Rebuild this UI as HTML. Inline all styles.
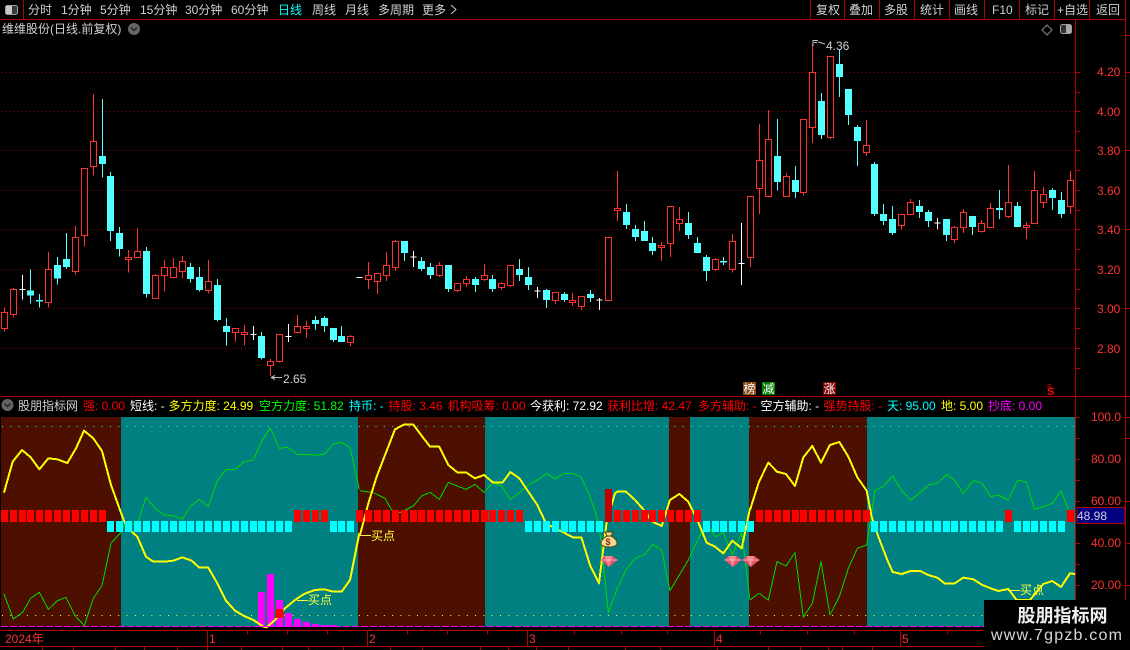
<!DOCTYPE html>
<html><head><meta charset="utf-8"><style>
html,body{margin:0;padding:0;background:#000;width:1130px;height:650px;overflow:hidden}
svg{display:block}
text{font-family:"Liberation Sans","WenQuanYi Zen Hei","Noto Sans CJK SC",sans-serif;font-size:12px;white-space:pre}
.t{fill:#d0d0d0}.r{fill:#f00}.w{fill:#fff}.y{fill:#ff0}.g{fill:#0f0}.c{fill:#0ff}.m{fill:#f0f}.a{fill:#ff3232}.b{fill:#ffff40}
</style></head><body>
<svg width="1130" height="650" viewBox="0 0 1130 650" xmlns="http://www.w3.org/2000/svg">
<rect width="1130" height="650" fill="#000"/>
<!-- grid -->
<path d="M1 72.5H1075M1 111.5H1075M1 150.5H1075M1 190.5H1075M1 229.5H1075M1 269.5H1075M1 308.5H1075M1 348.5H1075" stroke="#8c0000" stroke-dasharray="1 3" fill="none" shape-rendering="crispEdges"/>
<!-- candles part 1 -->
<g transform="translate(.5 60) scale(.33333)" shape-rendering="crispEdges">
<path fill="#000" stroke="#ff3232" stroke-width="3" d="M12 742V757h9V805h-18V757h9M12 805V815M39 684V688h9V764h-18V688h9M39 764V773M144 576V628h9V727h-18V628h9M144 727V743M225 498V532h9V635h-18V532h9M225 635V644M252 325h9V526h-18V325h9M252 526V560M279 102V244h9V319h-18V244h9M279 319V347M384 570V592h9V598h-18V592h9M384 598V638M411 504V574h9V592h-18V574h9M465 642V646h9V715h-18V646h9M492 600V622h9V646h-18V622h9M492 646V695M519 594V622h9V653h-18V622h9M519 653V656M546 588V604h9V634h-18V604h9M546 634V656M624 600V664h9V691h-18V664h9M624 691V701M705 805h9V818h-18V805h9M705 818V845M732 795V817h9V823h-18V817h9M732 823V857M810 897V904h9V916h-18V904h9M810 916V948M837 823h9V905h-18V823h9M837 905V908M891 765V799h9V817h-18V799h9M891 817V821M918 783V799h9V805h-18V799h9M918 805V834M1050 825V829h9V848h-18V829h9M1050 848V858"/>
<path fill="none" stroke="#54ffff" stroke-width="3" d="M90 628V731M117 702V743M171 591V674M198 519V627M306 117V353M330 336V543M357 501V590M438 561V713M570 609V668M597 621V695M651 657V785M678 774V857M783 816V899M945 768V810M972 768V816M999 804V846M1023 798V846"/>
<path fill="none" stroke="#54ffff" stroke-width="21" d="M90 691V707M117 720V725M171 615V656M198 597V621M306 288V312M330 348V513M357 519V567M438 573V702M570 621V657M597 651V690M651 675V780M678 798V816M783 828V894M945 780V792M972 774V798M999 804V840M1023 828V846"/>
<path fill="none" stroke="#fff" stroke-width="3" d="M66 645V719M57 688h18M759 798V840M750 823h18M864 792V846M855 829h18M1068 652h12"/>
</g>
<!-- candles part 2 -->
<g transform="translate(360.3 160) scale(.33333)" shape-rendering="crispEdges">
<path fill="#000" stroke="#ff3232" stroke-width="3" d="M25 306V346h9V358h-18V346h9M25 358V387M52 340h9V365h-18V340h9M52 365V402M79 276V316h9V347h-18V316h9M79 347V363M106 240V244h9V323h-18V244h9M106 323V333M238 306V316h9V347h-18V316h9M238 347V351M292 370h9V392h-18V370h9M292 392V396M319 348V358h9V371h-18V358h9M319 371V381M373 312V346h9V359h-18V346h9M373 359V363M424 366V370h9V383h-18V370h9M424 383V390M451 316h9V377h-18V316h9M451 377V381M586 396V397h9V422h-18V397h9M586 422V432M637 399V421h9V428h-18V421h9M637 428V438M664 408V409h9V440h-18V409h9M664 440V450M745 232h9V422h-18V232h9M772 33V145h9V152h-18V145h9M772 152V183M904 246V256h9V263h-18V256h9M904 263V303M931 139h9V251h-18V139h9M931 251V291M958 141V178h9V191h-18V178h9M958 191V213M1066 294V298h9V329h-18V298h9M1066 329V333"/>
<path fill="none" stroke="#54ffff" stroke-width="3" d="M133 243V303M184 291V333M211 309V357M265 315V396M346 351V396M397 345V396M478 297V363M505 321V390M559 387V444M613 396V426M691 390V426M799 132V207M826 195V243M853 183V243M877 231V285M985 156V237M1012 231V279M1039 285V363"/>
<path fill="none" stroke="#54ffff" stroke-width="21" d="M133 243V279M184 303V327M211 321V345M265 315V387M346 357V375M397 357V387M478 327V345M505 351V375M559 390V420M613 402V420M691 402V414M799 156V195M826 207V231M853 213V243M877 249V273M985 189V225M1012 249V279M1039 291V333"/>
<path fill="none" stroke="#fff" stroke-width="3" d="M159 273V321M150 291h18M531 381V414M522 393h18M717 414V450M708 420h18M0 352h6"/>
</g>
<!-- candles part 3 -->
<g transform="translate(720.3 30) scale(.33333)" shape-rendering="crispEdges">
<path fill="#000" stroke="#ff3232" stroke-width="3" d="M37 612V634h9V719h-18V634h9M37 719V728M91 499h9V682h-18V499h9M91 682V711M118 282V391h9V476h-18V391h9M118 476V552M145 240V328h9V500h-18V328h9M145 500V503M199 430V439h9V500h-18V439h9M250 268h9V488h-18V268h9M250 488V497M277 40V127h9V293h-18V127h9M277 293V339M331 79h9V323h-18V79h9M331 323V327M439 270V346h9V368h-18V346h9M439 368V378M544 553h9V587h-18V553h9M544 587V598M571 507V517h9V554h-18V517h9M703 588V592h9V629h-18V592h9M703 629V639M730 537V547h9V593h-18V547h9M730 593V609M784 570V580h9V605h-18V580h9M784 605V607M811 519V535h9V593h-18V535h9M865 405V517h9V560h-18V517h9M865 560V564M919 576V586h9V593h-18V586h9M919 593V627M943 423V481h9V580h-18V481h9M970 471V493h9V518h-18V493h9M970 518V534M1051 423V451h9V529h-18V451h9M1051 529V552"/>
<path fill="none" stroke="#54ffff" stroke-width="3" d="M10 681V705M172 267V481M226 408V504M304 189V327M358 60V201M385 177V285M412 285V408M463 396V558M490 522V585M517 528V615M598 510V564M625 540V591M679 567V633M757 558V615M838 480V567M892 516V591M997 474V540M1024 486V564"/>
<path fill="none" stroke="#54ffff" stroke-width="21" d="M10 693V698M172 378V456M226 450V486M304 213V315M358 102V141M385 177V255M412 291V333M463 402V552M490 552V573M517 567V609M598 528V546M625 546V573M679 567V615M757 558V591M838 534V540M892 528V591M997 480V504M1024 510V552"/>
<path fill="none" stroke="#fff" stroke-width="3" d="M64 579V765M55 700h18M651 564V597M642 579h18"/>
</g>
<!-- price labels -->
<path d="M813 40.5h5M813 40V46M814 42.5h3M818 42l7 2" stroke="#c0c0c0" fill="none" stroke-width="1"/>
<text x="826" y="50" class="t">4.36</text>
<path d="M271 377.5h11M271 377.5l4-2M271 377.5l4 2" stroke="#c0c0c0" fill="none"/>
<text x="283" y="383" class="t">2.65</text>
<!-- signal chips -->
<rect x="743" y="382" width="13" height="13" fill="#8a4a10"/><text x="743.5" y="393" class="w">榜</text>
<rect x="762" y="382" width="13" height="13" fill="#008000"/><text x="762.5" y="393" class="w">减</text>
<rect x="823" y="382" width="13" height="13" fill="#800000"/><text x="823.5" y="393" class="w">涨</text>
<text x="1047" y="395" class="r" style="font-size:11px;font-weight:bold">S</text>
<text x="1047" y="389" class="r" style="font-size:7px">S</text>
<!-- indicator bands -->
<g shape-rendering="crispEdges">
<rect x="1" y="417" width="1074" height="209.5" fill="#008080"/>
<rect x="1" y="417" width="120" height="209.5" fill="#4c0f00"/>
<rect x="358" y="417" width="127" height="209.5" fill="#4c0f00"/>
<rect x="669" y="417" width="21" height="209.5" fill="#4c0f00"/>
<rect x="749" y="417" width="118" height="209.5" fill="#4c0f00"/>
</g>
<path d="M2 426.5H1075" stroke="#0ff" stroke-dasharray="1 7.3" fill="none"/>
<path d="M2 615.5H1075" stroke="#ffff40" stroke-dasharray="1 7.3" fill="none"/>
<!-- magenta bars -->
<path d="M261.5 592V627M270.5 574V627M279.5 600V627M288.5 613V627M297.5 619V627M306.5 622V627M315.5 624V627M324.5 625V627M333.5 625V627" stroke="#f0f" stroke-width="7" fill="none" shape-rendering="crispEdges"/>
<!-- green -->
<g fill="none" stroke="#00d800" stroke-width="3" shape-rendering="crispEdges" stroke-linejoin="round">
<polyline transform="translate(0 420) scale(.33333)" points="12,522 40,597 68,577 92,535 118,517 145,568 172,542 198,532 225,587 253,617 280,535 306,497 333,370 360,340 373,315 400,312 412,310 438,232 465,265 492,285 520,287 547,297 572,258 598,238 625,260 652,182 678,148 705,148 732,125 760,120 787,60 811,24 838,85 863,82 892,103 920,103 947,106 973,103 1000,72 1023,67 1050,82 1078,208"/>
<polyline transform="translate(360 420) scale(.33333)" points="0,212 40,218 75,235 95,270 120,278 160,258 185,228 210,217 238,238 265,187 292,198 318,208 345,193 372,217 400,188 425,198 451,238 478,218 505,195 532,180 560,160 585,177 612,160 638,160 664,172 690,230 717,310 745,578 770,510 798,450 825,415 855,403 877,373 905,390 930,512 985,420 1025,335 1053,328 1065,350 1090,338 1117,405 1145,338 1170,540"/>
<polyline transform="translate(750 400) scale(.33333)" points="0,600 27,580 55,600 81,485 108,498 135,458 160,652 187,610 213,485 240,645 268,590 295,505 322,445 350,435 375,272 400,258 428,228 455,272 482,300 510,278 535,255 562,250 590,223 613,240 640,280 670,242 697,250 722,290 745,285 775,300 803,240 830,247 853,328 880,320 907,310 933,273 955,330"/>
</g>
<!-- yellow -->
<g fill="none" stroke="#ff0" stroke-width="6" shape-rendering="crispEdges" stroke-linejoin="round">
<polyline transform="translate(0 420) scale(.33333)" points="12,218 38,125 66,90 92,112 118,148 145,115 172,118 202,129 228,85 252,32 280,55 306,93 333,195 360,270 373,305 395,335 412,350 438,410 460,425 492,425 520,422 547,412 575,422 598,443 625,443 652,490 678,542 705,572 732,588 760,600 790,620 800,622 825,600 855,565 885,540 912,522 945,510 973,508 1000,515 1025,515 1050,480 1078,340"/>
<polyline transform="translate(360 420) scale(.33333)" points="0,345 25,250 50,170 105,28 133,13 160,14 210,80 238,80 265,135 292,157 318,157 345,175 372,165 400,188 427,188 451,156 478,175 505,215 532,255 558,310 585,325 610,337 638,352 664,352 690,435 717,490 735,345 740,305 765,220 772,215 798,215 825,240 850,268 877,305 905,318 930,240 958,222 985,245 1012,300 1040,368 1065,380 1090,400 1117,362 1145,385 1170,265"/>
<polyline transform="translate(750 400) scale(.33333)" points="0,330 27,245 55,188 81,215 108,222 135,258 160,172 187,138 213,188 240,135 268,126 295,170 322,232 350,272 365,350 385,410 412,480 428,516 455,522 482,513 510,513 535,525 562,533 585,551 613,551 640,533 670,538 697,555 722,565 745,573 775,567 800,600 840,600 880,552 907,543 933,561 960,520 975,522"/>
</g>
<rect x="275.5" y="609" width="8" height="9" fill="#f00"/>
<!-- squares -->
<path fill="none" stroke="#f00" stroke-width="7" shape-rendering="crispEdges" d="M4.5 510V522M13.5 510V522M22.5 510V522M30.5 510V522M39.5 510V522M48.5 510V522M57.5 510V522M66.5 510V522M75.5 510V522M84.5 510V522M93.5 510V522M102.5 510V522M297.5 510V522M306.5 510V522M315.5 510V522M324.5 510V522M359.5 510V522M368.5 510V522M377.5 510V522M386.5 510V522M395.5 510V522M404.5 510V522M413.5 510V522M421.5 510V522M430.5 510V522M439.5 510V522M448.5 510V522M457.5 510V522M466.5 510V522M475.5 510V522M484.5 510V522M492.5 510V522M501.5 510V522M510.5 510V522M519.5 510V522M617.5 510V522M626.5 510V522M635.5 510V522M644.5 510V522M652.5 510V522M661.5 510V522M670.5 510V522M679.5 510V522M688.5 510V522M697.5 510V522M759.5 510V522M768.5 510V522M777.5 510V522M786.5 510V522M795.5 510V522M803.5 510V522M812.5 510V522M821.5 510V522M830.5 510V522M839.5 510V522M848.5 510V522M857.5 510V522M866.5 510V522M1008.5 510V522M1070.5 510V522"/>
<path fill="none" stroke="#c00000" stroke-width="7" shape-rendering="crispEdges" d="M608.5 489V522"/>
<path fill="none" stroke="#0ff" stroke-width="7" shape-rendering="crispEdges" d="M110.5 521V532M119.5 521V532M128.5 521V532M137.5 521V532M146.5 521V532M155.5 521V532M164.5 521V532M173.5 521V532M182.5 521V532M190.5 521V532M199.5 521V532M208.5 521V532M217.5 521V532M226.5 521V532M235.5 521V532M244.5 521V532M253.5 521V532M261.5 521V532M270.5 521V532M279.5 521V532M288.5 521V532M333.5 521V532M341.5 521V532M350.5 521V532M528.5 521V532M537.5 521V532M546.5 521V532M555.5 521V532M564.5 521V532M572.5 521V532M581.5 521V532M590.5 521V532M599.5 521V532M706.5 521V532M715.5 521V532M723.5 521V532M732.5 521V532M741.5 521V532M750.5 521V532M874.5 521V532M883.5 521V532M892.5 521V532M901.5 521V532M910.5 521V532M919.5 521V532M928.5 521V532M937.5 521V532M946.5 521V532M954.5 521V532M963.5 521V532M972.5 521V532M981.5 521V532M990.5 521V532M999.5 521V532M1017.5 521V532M1026.5 521V532M1034.5 521V532M1043.5 521V532M1052.5 521V532M1061.5 521V532"/>
<!-- buy labels -->
<path d="M297 600.5H308M360 535.5H371M1008 590.5H1020" stroke="#ffff40" fill="none" shape-rendering="crispEdges"/>
<text x="308" y="604" class="b">买点</text>
<text x="371" y="540" class="b">买点</text>
<text x="1020" y="594" class="b">买点</text>
<!-- money bag -->
<path d="M605 532h8l-2 4c4 2 6 5 6 7 0 3-3 4-8 4s-8-1-8-4c0-2 2-5 6-7z" fill="#f3d98a" stroke="#5a3c10" stroke-width="1"/>
<path d="M606 536h6" stroke="#5a3c10"/>
<text x="605.5" y="545" style="font-size:9px;font-weight:bold" fill="#8a2a2a">$</text>
<!-- gems -->
<g><path d="M604.5 556h8l5 4-8.5 7-8.5-7z" fill="#e9506a"/><path d="M604.5 556h8l-4 11z" fill="#f48a96"/><path d="M600.5 560h17" stroke="#ffc0c8" stroke-width=".7"/></g>
<g transform="translate(124 0)"><path d="M604.5 556h8l5 4-8.5 7-8.5-7z" fill="#e9506a"/><path d="M604.5 556h8l-4 11z" fill="#f48a96"/><path d="M600.5 560h17" stroke="#ffc0c8" stroke-width=".7"/></g>
<g transform="translate(142 0)"><path d="M604.5 556h8l5 4-8.5 7-8.5-7z" fill="#e9506a"/><path d="M604.5 556h8l-4 11z" fill="#f48a96"/><path d="M600.5 560h17" stroke="#ffc0c8" stroke-width=".7"/></g>
<path d="M1 626.5H1075" stroke="#f0f" stroke-width="1" stroke-dasharray="7 2" fill="none" shape-rendering="crispEdges"/>
<!-- frame lines -->
<g stroke="#b40000" fill="none" shape-rendering="crispEdges">
<path d="M0 19.5H1125.5M0 396.5H1130M0 630.5H1075M0 646.5H1130M1075.5 19V650M1125.5 0V650M23.5 0V19M810.5 0V19M844.5 0V19M879.5 0V19M914.5 0V19M949.5 0V19M984.5 0V19M1019.5 0V19M1054.5 0V19M1089.5 0V19"/>
<path d="M207.5 630V646M367.5 630V646M527.5 630V646M714.5 630V646M900.5 630V646M247.5 630V634M287.5 630V634M327.5 630V634M407.5 630V634M447.5 630V634M487.5 630V634M574.5 630V634M621.5 630V634M667.5 630V634M760.5 630V634M807.5 630V634M854.5 630V634M947.5 630V634"/>
<path d="M42.5 646V650M73.5 646V650M115.5 646V650M144.5 646V650M177.5 646V650M207.5 646V650M241.5 646V650M282.5 646V650M308.5 646V650M343.5 646V650M390.5 646V650M422.5 646V650M480.5 646V650M508.5 646V650M536.5 646V650M568.5 646V650M625.5 646V650M660.5 646V650M717.5 646V650M768.5 646V650M800.5 646V650M828.5 646V650M842.5 646V650M872.5 646V650"/>
<path d="M1076 72.5h4M1076 92.5h4M1076 111.5h4M1076 131.5h4M1076 150.5h4M1076 170.5h4M1076 190.5h4M1076 210.5h4M1076 229.5h4M1076 249.5h4M1076 269.5h4M1076 289.5h4M1076 308.5h4M1076 328.5h4M1076 348.5h4M1076 368.5h4M1076 417.5h4M1076 438.5h4M1076 459.5h4M1076 480.5h4M1076 501.5h4M1076 543.5h4M1076 564.5h4M1076 585.5h4M1076 606.5h4"/>
<path d="M1126 35.5h4M1126 72.5h4M1126 150.5h4M1126 229.5h4M1126 308.5h4M1126 417.5h4M1126 438.5h4M1126 501.5h4M1126 543.5h4M1126 585.5h4"/>
</g>
<!-- y axis labels -->
<text x="1097" y="76" class="a">4.20</text><text x="1097" y="116" class="a">4.00</text><text x="1097" y="155" class="a">3.80</text><text x="1097" y="195" class="a">3.60</text><text x="1097" y="234" class="a">3.40</text><text x="1097" y="274" class="a">3.20</text><text x="1097" y="313" class="a">3.00</text><text x="1097" y="353" class="a">2.80</text>
<text x="1091" y="421" class="a">100.0</text><text x="1091" y="463" class="a">80.00</text><text x="1091" y="505" class="a">60.00</text><text x="1091" y="547" class="a">40.00</text><text x="1091" y="589" class="a">20.00</text>
<rect x="1077" y="507.5" width="48" height="16" fill="#000080" stroke="#b40000" shape-rendering="crispEdges"/>
<text x="1077" y="520" style="fill:#d0d0e0">48.98</text>
<!-- axis dates -->
<text x="5" y="643" class="a">2024年</text>
<text x="209" y="643" class="a">1</text><text x="369" y="643" class="a">2</text><text x="529" y="643" class="a">3</text><text x="716" y="643" class="a">4</text><text x="902" y="643" class="a">5</text>
<!-- toolbar -->
<rect x="5.5" y="5.5" width="12" height="9" rx="2" fill="#3a3a3a" stroke="#a0a0a0"/><rect x="6" y="6" width="6" height="8" fill="#c8c8c8"/>
<text x="28" y="14" class="t">分时</text><text x="61" y="14" class="t">1分钟</text><text x="100" y="14" class="t">5分钟</text><text x="140" y="14" class="t">15分钟</text><text x="185" y="14" class="t">30分钟</text><text x="231" y="14" class="t">60分钟</text>
<text x="278" y="14" class="c">日线</text><text x="312" y="14" class="t">周线</text><text x="345" y="14" class="t">月线</text><text x="378" y="14" class="t">多周期</text><text x="422" y="14" class="t">更多</text>
<path d="M451 5l5 4.5-5 4.5" stroke="#c8c8c8" fill="none"/>
<text x="816" y="14" class="t">复权</text><text x="849" y="14" class="t">叠加</text><text x="884" y="14" class="t">多股</text><text x="920" y="14" class="t">统计</text><text x="954" y="14" class="t">画线</text><text x="992" y="14" class="t">F10</text><text x="1025" y="14" class="t">标记</text><text x="1057" y="14" class="t">+自选</text><text x="1096" y="14" class="t">返回</text>
<!-- title -->
<text x="2" y="33" class="t">维维股份(日线.前复权)</text>
<circle cx="134" cy="29" r="6" fill="#666"/><path d="M131 27.5l3 3 3-3" stroke="#222" stroke-width="1.5" fill="none"/>
<path d="M1047 25l5 5-5 5-5-5z" stroke="#888" fill="none"/>
<rect x="1060.5" y="24.5" width="11" height="9" rx="2" fill="#333" stroke="#a0a0a0"/><rect x="1066" y="25" width="5" height="8" fill="#aaa"/>
<!-- indicator row -->
<circle cx="7.5" cy="405" r="6" fill="#666"/><path d="M4.5 403.5l3 3 3-3" stroke="#222" stroke-width="1.5" fill="none"/>
<text x="18" y="410" class="t">股朋指标网</text>
<text x="83" y="410" class="r">强: 0.00</text>
<text x="130" y="410" class="w">短线: -</text>
<text x="168.5" y="410" class="y">多方力度: 24.99</text>
<text x="259" y="410" class="g">空方力度: 51.82</text>
<text x="349" y="410" class="c">持币: -</text>
<text x="388.5" y="410" class="r">持股: 3.46</text>
<text x="447.5" y="410" class="r">机构吸筹: 0.00</text>
<text x="530" y="410" class="w">今获利: 72.92</text>
<text x="607" y="410" class="r">获利比增: 42.47</text>
<text x="698" y="410" class="r">多方辅助: -</text>
<text x="760.5" y="410" class="w">空方辅助: -</text>
<text x="823.5" y="410" class="r">强势持股: -</text>
<text x="887" y="410" class="c">天: 95.00</text>
<text x="941" y="410" class="y">地: 5.00</text>
<text x="988" y="410" class="m">抄底: 0.00</text>
<!-- watermark -->
<rect x="984" y="600" width="146" height="50" fill="#000"/>
<text x="1017.5" y="622" style="font-size:18px;font-weight:bold;fill:#f0f0f0">股朋指标网</text>
<text x="991" y="640" style="font-size:16px;fill:#d8d8d8;letter-spacing:1.2px">www.7gpzb.com</text>
</svg>
</body></html>
